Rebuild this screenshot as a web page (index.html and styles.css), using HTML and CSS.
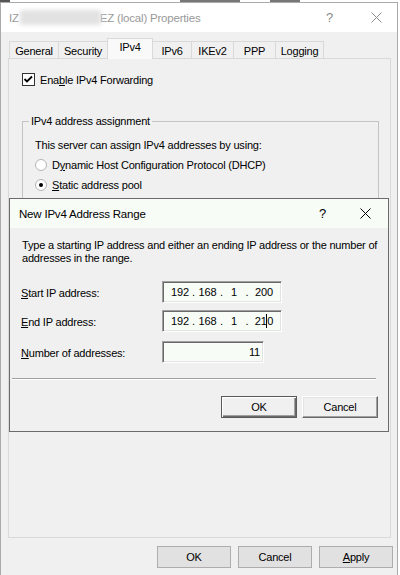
FILE: index.html
```html
<!DOCTYPE html>
<html>
<head>
<meta charset="utf-8">
<link rel="stylesheet" href="styles.css">
</head>
<body>
<div class="screen">
  <div class="behind"><span class="frag f1"></span><span class="frag f2"></span><span class="frag f3"></span></div>
  <div class="window">
    <div class="titlebar">
      <span class="title">IZ</span><span class="blur"></span><span class="title">EZ (local) Properties</span>
      <span class="tb-help">?</span>
      <svg class="tb-close" width="11" height="11" viewBox="0 0 11 11"><path d="M0.5 0.5 L10.5 10.5 M10.5 0.5 L0.5 10.5" stroke="#8c8c8c" stroke-width="1" fill="none"/></svg>
    </div>
    <div class="client">
      <div class="tabs">
        <div class="tab t-general">General</div>
        <div class="tab t-security">Security</div>
        <div class="tab t-ipv4 selected">IPv4</div>
        <div class="tab t-ipv6">IPv6</div>
        <div class="tab t-ikev2">IKEv2</div>
        <div class="tab t-ppp">PPP</div>
        <div class="tab t-logging">Logging</div>
      </div>
      <div class="panel">
        <div class="check-row">
          <span class="checkbox"><svg width="11" height="11" viewBox="0 0 11 11"><path d="M1.5 5 L4 7.5 L9 2.5" stroke="#000" stroke-width="1.8" fill="none"/></svg></span>
          <span>Ena<u>b</u>le IPv4 Forwarding</span>
        </div>
        <div class="group">
          <div class="legend">IPv4 address assignment</div>
          <div class="g-row">This server can assign IPv4 addresses by using:</div>
          <div class="g-row"><span class="radio"></span><span>D<u>y</u>namic Host Configuration Protocol (DHCP)</span></div>
          <div class="g-row"><span class="radio on"></span><span><u>S</u>tatic address pool</span></div>
          <div class="listview">
            <div class="lv-col"></div><div class="lv-col"></div><div class="lv-col"></div><div class="lv-col"></div><div class="lv-col last"></div>
          </div>
        </div>
      </div>
      <div class="buttons">
        <div class="btn">OK</div>
        <div class="btn">Cancel</div>
        <div class="btn"><u>A</u>pply</div>
      </div>
    </div>
  </div>

  <div class="dialog">
    <div class="d-titlebar">
      <span class="d-title">New IPv4 Address Range</span>
      <span class="d-help">?</span>
      <svg class="d-close" width="11" height="11" viewBox="0 0 11 11"><path d="M0.5 0.5 L10.5 10.5 M10.5 0.5 L0.5 10.5" stroke="#000" stroke-width="1" fill="none"/></svg>
    </div>
    <div class="d-body">
      <div class="d-text">Type a starting IP address and either an ending IP address or the number of addresses in the range.</div>
      <div class="f-row r-start">
        <span class="f-label"><u>S</u>tart IP address:</span>
        <div class="field ip"><span>192</span><span>.</span><span>168</span><span>.</span><span>1</span><span>.</span><span>200</span></div>
      </div>
      <div class="f-row r-end">
        <span class="f-label"><u>E</u>nd IP address:</span>
        <div class="field ip"><span>192</span><span>.</span><span>168</span><span>.</span><span>1</span><span>.</span><span>21<i class="caret"></i>0</span></div>
      </div>
      <div class="f-row r-num">
        <span class="f-label"><u>N</u>umber of addresses:</span>
        <div class="field num">11</div>
      </div>
      <div class="sep"></div>
      <div class="d-buttons">
        <div class="cbtn default">OK</div>
        <div class="cbtn">Cancel</div>
      </div>
    </div>
  </div>
</div>
</body>
</html>
```

FILE: styles.css
```css
* { box-sizing: border-box; }
html, body { margin: 0; padding: 0; }
body {
  width: 400px; height: 575px; overflow: hidden; background: #fff;
  font-family: "Liberation Sans", Arial, sans-serif; font-size: 11px; color: #000;
  letter-spacing: -0.2px;
}
u { text-decoration: underline; text-underline-offset: 1px; }
.screen { position: relative; width: 400px; height: 575px; }

.behind { height: 2px; display: flex; background: #fff; }
.frag { height: 2px; background: #555; }
.f1 { width: 10px; margin-left: 0; }
.f2 { width: 60px; margin-left: 170px; background: #777; }
.f3 { width: 30px; margin-left: 30px; background: #777; }

.window {
  width: 398px; height: 573px;
  border: 1px solid #aaaaaa; border-bottom: none;
  background: #f0f0f0;
  display: flex; flex-direction: column;
}
.titlebar {
  height: 29px; flex: none; background: #fff;
  display: flex; align-items: center; padding-left: 8px;
}
.title { color: #999; font-size: 11.5px; }
.blur {
  width: 81px; height: 15px; background: #e2e2e2; filter: blur(2px);
  margin: 0 -1px 0 1px;
}
.tb-help { margin-left: auto; color: #8c8c8c; font-size: 13px; width: 8px; }
.tb-close { margin: 0 15px 0 37px; }

.client {
  flex: 1; display: flex; flex-direction: column;
  padding: 6px 4px 0 7px;
}
.tabs {
  height: 20px; display: flex; align-items: flex-end;
  margin-left: 1px; position: relative; z-index: 1;
}
.tab {
  height: 17px; border: 1px solid #d9d9d9; border-bottom: none;
  margin-right: -1px; background: #f0f0f0;
  display: flex; align-items: center; justify-content: center;
  padding-top: 1px;
}
.tab.selected {
  height: 21px; margin-bottom: -1px; background: #f9f9f9;
  position: relative; z-index: 2; align-items: flex-start; padding-top: 2px;
}
.t-general { width: 50px; }
.t-security { width: 50px; }
.t-ipv4 { width: 46px; }
.t-ipv6 { width: 40px; }
.t-ikev2 { width: 43px; }
.t-ppp { width: 43px; }
.t-logging { width: 49px; }

.panel {
  width: 383px; height: 480px; flex: none;
  border: 1px solid #d9d9d9; background: #f0f0f0;
  padding-top: 14px;
}
.check-row { display: flex; align-items: center; height: 13px; margin-left: 13px; gap: 5px; }
.checkbox {
  width: 13px; height: 13px; border: 1px solid #333; background: #fff;
  display: flex; align-items: center; justify-content: center;
}
.group {
  margin: 35px 0 0 13px; width: 357px; height: 300px;
  border: 1px solid #c4c4c4; padding-left: 12px;
}
.legend {
  height: 13px; line-height: 13px; margin: -7px 0 0 -6px;
  padding: 0 2px; background: #f0f0f0; display: inline-block;
  vertical-align: top;
}
.g-row { height: 20px; display: flex; align-items: center; gap: 5px; }
.legend + .g-row { margin-top: 1px; }
.radio {
  width: 12px; height: 12px; border-radius: 50%;
  border: 1px solid #b4b4b4; background: #fff;
  display: flex; align-items: center; justify-content: center;
}
.radio.on::after { content: ""; width: 4px; height: 4px; border-radius: 50%; background: #000; }
.listview {
  margin: 5px 0 0 18px; width: 313px; height: 100px;
  border: 1px solid #828282; border-right-color: #c8c8c8; display: flex;
}
.lv-col { width: 62px; height: 18px; border-right: 1px solid #9a9a9a; }
.lv-col.last { flex: 1; border-right: none; }

.buttons { display: flex; gap: 7px; justify-content: flex-end; margin-top: 8px; }
.btn {
  width: 74px; height: 22px; background: #e1e1e1; border: 1px solid #adadad;
  display: flex; align-items: center; justify-content: center;
}

/* overlay dialog */
.dialog {
  position: absolute; left: 9px; top: 198px; width: 380px; height: 234px;
  border: 1px solid #6b6b6b; background: #f0f0f0;
  display: flex; flex-direction: column;
}
.d-titlebar {
  height: 29px; flex: none; background: #f7fcf7;
  display: flex; align-items: center; padding-left: 9px;
}
.d-title { font-size: 11.5px; color: #000; }
.d-help { margin-left: auto; font-size: 13px; width: 8px; }
.d-close { margin: 0 17px 0 33px; }
.d-body { padding: 11px 10px 0 12px; }
.d-text { line-height: 13px; width: 362px; }
.f-row { display: flex; align-items: center; }
.r-start { margin-top: 16px; }
.r-end { margin-top: 7px; }
.r-num { margin-top: 9px; }
.f-label { width: 141px; margin-left: -1px; padding-top: 1px; }
.field {
  height: 22px; background: #f7fcf7;
  border: 1px solid; border-color: #a0a0a0 #fff #fff #a0a0a0;
  box-shadow: inset 1px 1px 0 #696969, inset -1px -1px 0 #e3e3e3;
}
.ip {
  width: 120px; display: grid;
  grid-template-columns: 22px 5px 23px 5px 20px 6px 28px;
  align-items: center; padding-left: 6px; text-align: center;
}
.num { width: 102px; text-align: right; padding: 3px 3px 0 0; line-height: 15px; }
.caret { display: inline-block; width: 1px; height: 14px; background: #000; vertical-align: -3px; margin: 0 0 0 -0.5px; }
.sep {
  margin: 15px 0 0 -10px; width: 364px; height: 2px;
  border-top: 1px solid #a0a0a0; border-bottom: 1px solid #fff;
}
.d-buttons { display: flex; justify-content: flex-end; gap: 5px; margin-top: 16px; }
.cbtn {
  width: 76px; height: 22px; background: #f0f0f0;
  border: 1px solid; border-color: #fff #696969 #696969 #fff;
  box-shadow: inset -1px -1px 0 #a0a0a0, inset 1px 1px 0 #e3e3e3;
  display: flex; align-items: center; justify-content: center;
}
.cbtn.default {
  border-color: #5a5a5a;
  box-shadow: inset 1px 1px 0 #fff, inset -1px -1px 0 #696969, inset -2px -2px 0 #a0a0a0;
}
```
